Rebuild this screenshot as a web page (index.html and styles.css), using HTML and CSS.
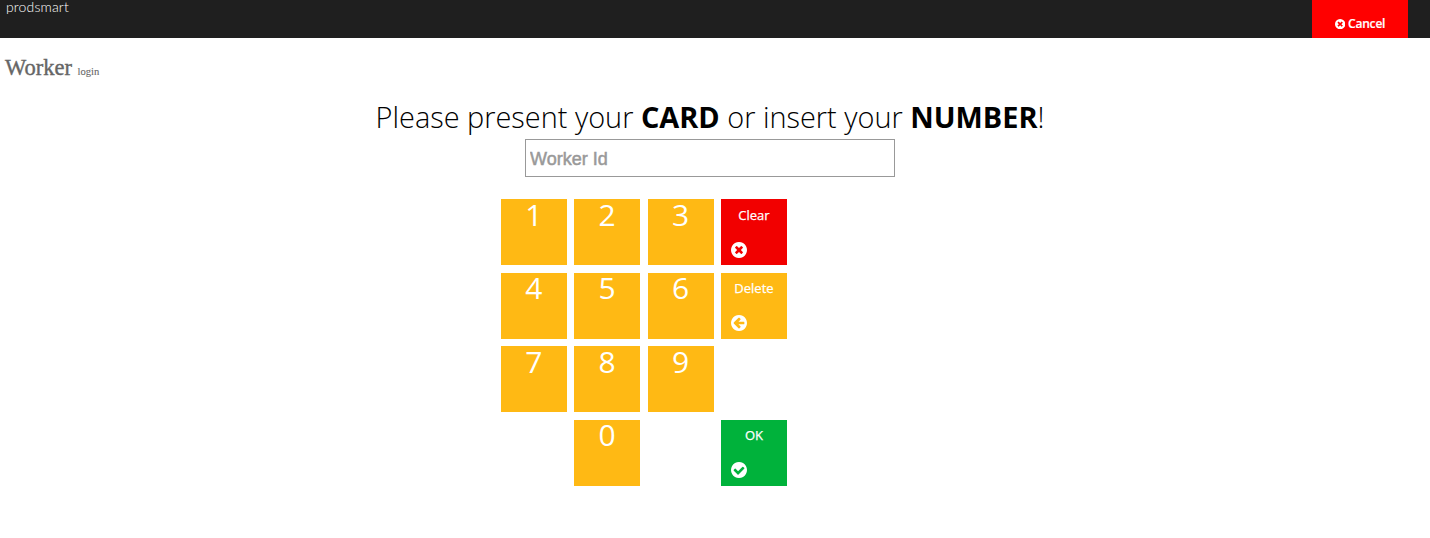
FILE: index.html
```html
<!DOCTYPE html>
<html lang="en">
<head>
<meta charset="utf-8">
<title>Worker login</title>
<link rel="stylesheet" href="styles.css">
</head>
<body>
<svg class="defs" aria-hidden="true">
  <symbol id="times" viewBox="128 128 1536 1536"><path d="M1277 1122q0-26-19-45l-181-181 181-181q19-19 19-45 0-27-19-46l-90-90q-19-19-46-19-26 0-45 19l-181 181-181-181q-19-19-45-19-27 0-46 19l-90 90q-19 19-19 46 0 26 19 45l181 181-181 181q-19 19-19 45 0 27 19 46l90 90q19 19 46 19 26 0 45-19l181-181 181 181q19 19 45 19 27 0 46-19l90-90q19-19 19-46zm387-226q0 209-103 385.500t-279.500 279.500-385.500 103-385.500-103-279.500-279.500-103-385.500 103-385.500 279.500-279.500 385.500-103 385.500 103 279.500 279.500 103 385.500z"/></symbol>
  <symbol id="back" viewBox="128 128 1536 1536"><path d="M1408 960v-128q0-26-19-45t-45-19h-502l189-189q19-19 19-45t-19-45l-91-91q-18-18-45-18t-45 18l-362 362-91 91q-18 18-18 45t18 45l91 91 362 362q18 18 45 18t45-18l91-91q18-18 18-45t-18-45l-189-189h502q26 0 45-19t19-45zm256-64q0 209-103 385.500t-279.500 279.500-385.500 103-385.500-103-279.500-279.500-103-385.500 103-385.500 279.500-279.500 385.500-103 385.500 103 279.500 279.500 103 385.500z"/></symbol>
  <symbol id="check" viewBox="128 128 1536 1536"><path d="M1412 734q0-28-18-46l-91-90q-19-19-45-19t-45 19l-408 407-226-226q-19-19-45-19t-45 19l-91 90q-18 18-18 46 0 27 18 45l362 362q19 19 45 19 27 0 46-19l543-543q18-18 18-45zm252 162q0 209-103 385.500t-279.500 279.500-385.500 103-385.500-103-279.500-279.500-103-385.500 103-385.500 279.500-279.500 385.500-103 385.500 103 279.500 279.500 103 385.500z"/></symbol>
</svg>
<header class="topbar">
  <span class="brand">prodsmart</span>
  <a class="cancel"><svg class="cancel-icon"><use href="#times"/></svg>Cancel</a>
</header>
<h1 class="title">Worker <small class="subtitle">login</small></h1>
<main class="login">
  <p class="prompt">Please present your <b>CARD</b> or insert your <b>NUMBER</b>!</p>
  <input class="worker-id" type="text" placeholder="Worker Id">
  <div class="keypad">
    <div class="key">1</div>
    <div class="key">2</div>
    <div class="key">3</div>
    <div class="key action clear"><span>Clear</span><svg class="icon"><use href="#times"/></svg></div>
    <div class="key">4</div>
    <div class="key">5</div>
    <div class="key">6</div>
    <div class="key action"><span>Delete</span><svg class="icon"><use href="#back"/></svg></div>
    <div class="key">7</div>
    <div class="key">8</div>
    <div class="key">9</div>
    <div class="key zero">0</div>
    <div class="key action ok"><span>OK</span><svg class="icon"><use href="#check"/></svg></div>
  </div>
</main>
</body>
</html>
```
FILE: styles.css
```css
* { box-sizing: border-box; }

body {
  margin: 0;
  background: #fff;
  color: #000;
  font-family: "Open Sans", sans-serif;
}

.defs { display: none; }

.topbar {
  display: flex;
  justify-content: space-between;
  height: 38px;
  padding: 0 22px 0 6px;
  background: #1f1f1f;
}

.brand {
  color: #fff;
  font: 300 14px/14px Lato, sans-serif;
  letter-spacing: 0.15px;
}

.cancel {
  display: flex;
  justify-content: center;
  gap: 3px;
  width: 96px;
  padding-top: 15px;
  background: #f00;
  color: #fff;
  font-size: 12px;
  font-weight: 600;
  line-height: 17px;
  letter-spacing: -0.2px;
  -webkit-text-stroke: 0.2px #fff;
}

.cancel-icon {
  width: 10.300px;
  height: 10.300px;
  margin-top: 4px;
  fill: currentColor;
}

.title {
  height: 60px;
  margin: 0;
  padding: 16px 0 0 5px;
  color: #666;
  font: 400 22.500px/27px "Liberation Serif", serif;
  -webkit-text-stroke: 0.4px #666;
}

.subtitle {
  font-size: 10.600px;
  -webkit-text-stroke: 0.1px #666;
}

.login {
  display: flex;
  flex-direction: column;
  align-items: center;
  width: 1420px;
}

.prompt {
  height: 41px;
  margin: 0;
  font-size: 28.900px;
  font-weight: 300;
  line-height: 38px;
  white-space: nowrap;
}

.prompt b { font-weight: 700; }

.worker-id {
  width: 370px;
  height: 38px;
  padding: 3px 4px 1px;
  border: 1px solid #999;
  border-radius: 0;
  background: #fff;
  font: 18px "Liberation Sans", sans-serif;
}

.worker-id::placeholder {
  color: #999;
  -webkit-text-stroke: 0.5px #999;
}

.keypad {
  display: grid;
  grid-template-columns: repeat(4, 66px);
  grid-auto-rows: 66px;
  gap: 7.4px;
  align-self: flex-start;
  margin: 22.4px 0 0 500.8px;
}

.key {
  padding-top: 0.600px;
  background: #ffb914;
  color: #fff;
  font-size: 30px;
  line-height: 30.200px;
  text-align: center;
}

.zero { grid-area: 4 / 2; }

.action {
  display: flex;
  flex-direction: column;
  padding-top: 6.600px;
  font-size: 13px;
  line-height: 18px;
  -webkit-text-stroke: 0.25px #fff;
}

.clear { background: #f20000; }
.ok { grid-area: 4 / 4; background: #00b23b; }

.icon {
  width: 16px;
  height: 16px;
  margin: 17.700px 0 0 10.400px;
  fill: currentColor;
}
```
